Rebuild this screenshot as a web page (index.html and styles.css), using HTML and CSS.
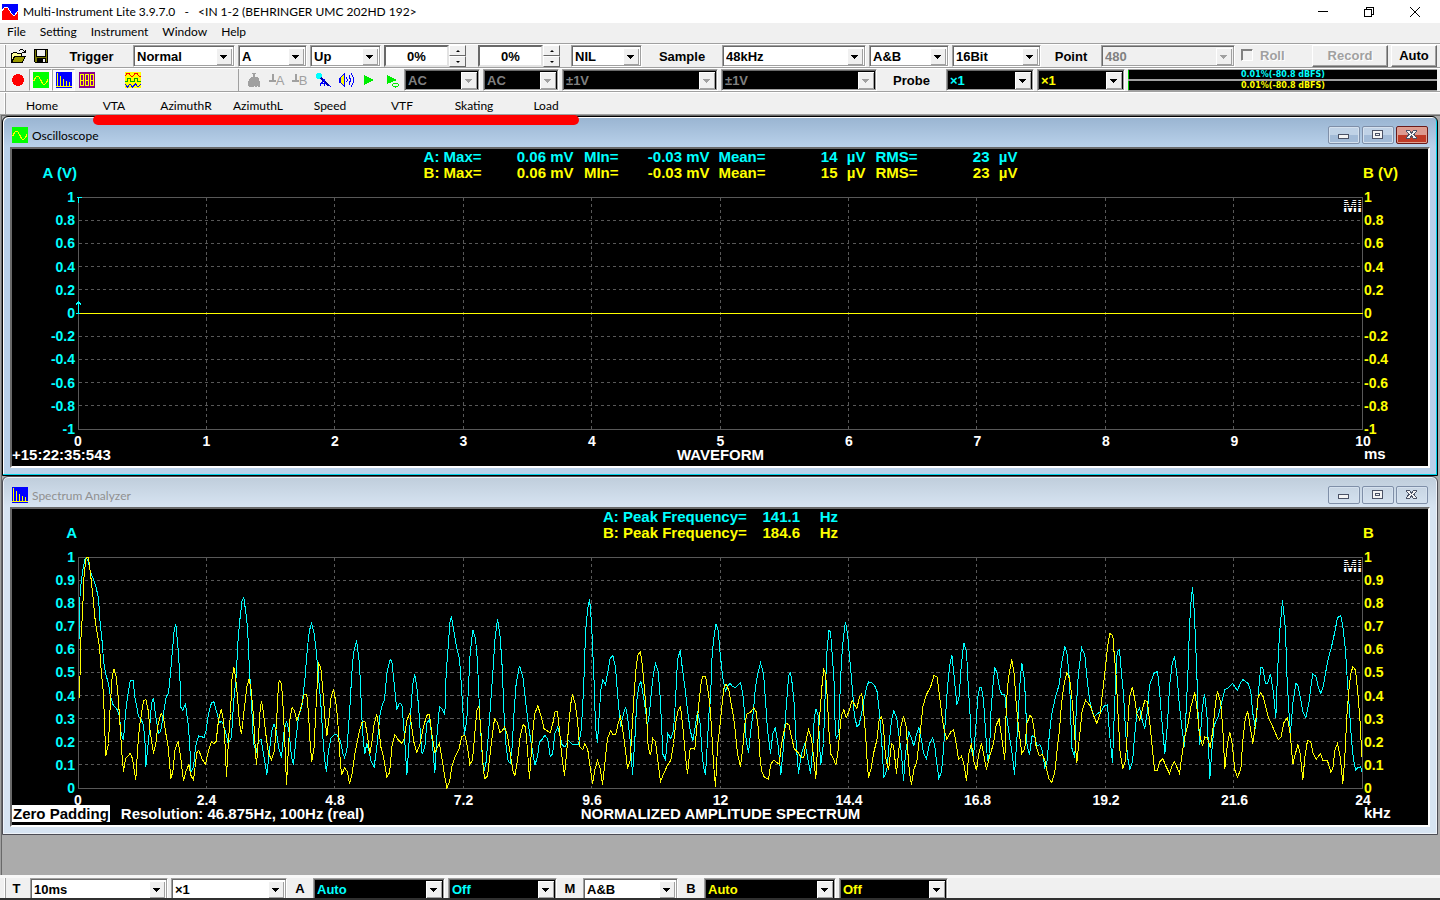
FILE: index.html
```html
<!DOCTYPE html>
<html lang="en">
<head>
<meta charset="utf-8">
<title>Multi-Instrument Lite 3.9.7.0</title>
<link rel="stylesheet" href="styles.css">
</head>
<body>
<svg class="defs" aria-hidden="true">
  <symbol id="i-scope" viewBox="0 0 16 16"><rect width="16" height="16" fill="#0f0"/><path d="M0 8.500h1l1-2 1-1.500 1-1h1l1 1 1 2 1 1.500 1 2 1 1.500h2l1-1 1-1.500 1-2" fill="none" stroke="#ff0"/></symbol>
  <symbol id="i-spec" viewBox="0 0 16 16"><rect width="16" height="16" fill="#00f"/><path d="M1.500 1v13M4.500 4v10M7.500 7v7M10.500 9v5M13.500 10v4M0 14.500h16" fill="none" stroke="#ff0"/></symbol>
</svg>
<header class="titlebar">
  <svg class="ico" viewBox="0 0 16 16"><rect width="16" height="16" fill="#00f"/><path d="M0 7l2-3 2-1 2 1 3 5 2 2 2 0 3-4v9H0z" fill="#f00"/><path d="M0 7l2-3 2-1 2 1 3 5 2 2 2 0 3-4" fill="none" stroke="#fff"/></svg>
  <h1>Multi-Instrument Lite 3.9.7.0 &nbsp; - &nbsp; &lt;IN 1-2 (BEHRINGER UMC 202HD 192&gt;</h1>
  <div class="syscontrols">
    <button aria-label="Minimize"><svg viewBox="0 0 12 12"><path d="M1 5.500h10"/></svg></button>
    <button aria-label="Restore"><svg viewBox="0 0 12 12"><path d="M1.500 3.500h7v7h-7zM3.500 3v-1.500h7v7H9"/></svg></button>
    <button aria-label="Close"><svg viewBox="0 0 12 12"><path class="smooth" d="M1 1l10 10M11 1L1 11"/></svg></button>
  </div>
</header>
<nav class="menubar">
  <button>File</button><button>Setting</button><button>Instrument</button><button>Window</button><button>Help</button>
</nav>
<div class="toolbar">
  <i class="grip"></i>
  <div class="filetools">
    <button aria-label="Open"><svg viewBox="0 0 16 16"><path d="M1.500 14.500v-9h1l1-1h3l1 1h4v3" fill="#ff9" stroke="#000"/><path d="M1.500 14.500l3-6h11l-3.500 6z" fill="#990" stroke="#000"/><path d="M8.500 3.500l1-1 1-1h2l1 1 1 1.500M12 4.500h3v-3" fill="none" stroke="#000"/></svg></button>
    <button aria-label="Save"><svg viewBox="0 0 16 16"><path d="M1.500 1.500h13v13h-12l-1-1z" fill="#770" stroke="#000"/><path d="M4 2h8v6H4z" fill="#f0f0f0"/><path d="M4 10h9v4H4z" fill="#000"/><path d="M10 11h2v3h-2z" fill="#f0f0f0"/><path d="M3.500 2v6.500h9V2" fill="none" stroke="#000"/></svg></button>
  </div>
  <label class="cap w77" for="trg">Trigger</label>
  <span class="combo w102"><select id="trg"><option>Normal</option></select></span>
  <span class="combo w69"><select aria-label="Trigger source"><option>A</option></select></span>
  <span class="combo w71"><select aria-label="Trigger edge"><option>Up</option></select></span>
  <span class="spin"><input aria-label="Trigger level" value="0%"><span><button class="up" aria-label="Raise level"></button><button class="down" aria-label="Lower level"></button></span></span>
  <span class="spin second"><input aria-label="Trigger delay" value="0%"><span><button class="up" aria-label="Raise delay"></button><button class="down" aria-label="Lower delay"></button></span></span>
  <span class="combo w71 after"><select aria-label="Filter"><option>NIL</option></select></span>
  <label class="cap w74" for="smp">Sample</label>
  <span class="combo w144"><select id="smp"><option>48kHz</option></select></span>
  <span class="combo w80"><select aria-label="Channels"><option>A&amp;B</option></select></span>
  <span class="combo w89"><select aria-label="Bit depth"><option>16Bit</option></select></span>
  <label class="cap w54" for="pts">Point</label>
  <span class="combo grow off"><select id="pts" disabled><option>480</option></select></span>
  <label class="roll"><input type="checkbox" disabled>Roll</label>
  <button class="push w76" disabled>Record</button>
  <button class="push w46">Auto</button>
</div>
<div class="toolbar">
  <i class="grip"></i>
  <div class="tools">
    <button aria-label="Run"><svg viewBox="0 0 16 16"><circle cx="8" cy="8" r="6" fill="#f00"/></svg></button>
    <button class="on" aria-label="Oscilloscope"><svg><use href="#i-scope"/></svg></button>
    <button class="on" aria-label="Spectrum analyzer"><svg><use href="#i-spec"/></svg></button>
    <button aria-label="Multimeter"><svg viewBox="0 0 16 16"><rect width="16" height="16" fill="#808"/><path d="M1.500 2.500h3v11h-3zM6.500 2.500h3v11h-3zM11.500 2.500h3v11h-3zM1 8h4M6 8h4M11 8h4" fill="none" stroke="#ff0"/></svg></button>
    <i></i>
    <button aria-label="Signal generator"><svg viewBox="0 0 16 16"><rect width="16" height="16" fill="#ff0"/><path d="M0 4l2-2.500h2L6 4h2l2-2.500h2L14 4h2" fill="none" stroke="#f00"/><path d="M0 9.500h2.500v-3h3v3h4v-3h3v3H16" fill="none" stroke="#0a0"/><path d="M0 12l2.500 3L5 12l2.500 3 3-3 2.500 3 3-3" fill="none" stroke="#00f"/></svg></button>
  </div>
  <div class="tools right">
    <button aria-label="Calibration"><svg viewBox="0 0 16 16"><path d="M6 1h4v1H9v3h2l2 2v2h1v6h-2l-1-2v2H9l-1-1-1 1H3l-1-1V9h1V7l2-2h2V2H6z" fill="#a0a0a0"/></svg></button>
    <button class="gnd" aria-label="Zero A"><svg viewBox="0 0 7 16"><path d="M3.500 2v6M0 8.500h7" stroke="#a0a0a0" stroke-width="2"/></svg>A</button>
    <button class="gnd" aria-label="Zero B"><svg viewBox="0 0 7 16"><path d="M3.500 2v6M0 8.500h7" stroke="#a0a0a0" stroke-width="2"/></svg>B</button>
    <button aria-label="Microphone"><svg viewBox="0 0 16 16"><circle cx="4" cy="4" r="3" fill="#0ff"/><path d="M6 6l8 8" stroke="#00a" stroke-width="2"/><path d="M5 14l4-7 1 7M5 11.500h6M14 13l2 2" fill="none" stroke="#00f"/></svg></button>
    <button aria-label="Speaker"><svg viewBox="0 0 16 16"><path d="M.5 5.500h3v5h-3z" fill="#00f"/><path d="M2.500 5.500l4-4v13l-4-4z" fill="#ff0" stroke="#00f"/><path d="M8.500 5.500l1 2.500-1 2.500M11 3.500l1.500 4.500-1.500 4.500M13 1.500l2.500 4v5l-2.500 4" fill="none" stroke="#00f"/></svg></button>
    <button aria-label="Play"><svg viewBox="0 0 16 16"><path d="M3 3l10 5-10 5z" fill="#0e0"/></svg></button>
    <button aria-label="Play loop"><svg viewBox="0 0 16 16"><path d="M3 3l10 5-10 4z" fill="#0e0"/><ellipse cx="11.500" cy="13" rx="3" ry="2" fill="#f0f0f0" stroke="#0e0"/></svg></button>
  </div>
  <span class="combo black off w76"><select aria-label="Coupling A" disabled><option>AC</option></select></span>
  <span class="combo black off w76"><select aria-label="Coupling B" disabled><option>AC</option></select></span>
  <span class="combo black off w156"><select aria-label="Range A" disabled><option>±1V</option></select></span>
  <span class="combo black off w156"><select aria-label="Range B" disabled><option>±1V</option></select></span>
  <label class="cap w63" for="prb">Probe</label>
  <span class="combo black cy w88"><select id="prb"><option>×1</option></select></span>
  <span class="combo black ye w88"><select aria-label="Probe B"><option>×1</option></select></span>
  <div class="meters"><p class="cy">0.01%(-80.8 dBFS)</p><p class="ye">0.01%(-80.8 dBFS)</p></div>
</div>
<div class="toolbar tabs">
  <i class="grip"></i>
  <button>Home</button><button>VTA</button><button>AzimuthR</button><button>AzimuthL</button><button>Speed</button><button>VTF</button><button>Skating</button><button>Load</button>
</div>
<main class="mdi">
  <div class="marker"></div>
  <section class="win active">
    <header>
      <svg class="ico"><use href="#i-scope"/></svg><h2>Oscilloscope</h2>
      <button aria-label="Minimize"><svg viewBox="0 0 12 10"><rect x=".5" y="4.500" width="10" height="4"/></svg></button>
      <button aria-label="Maximize"><svg viewBox="0 0 12 10"><path d="M.5.5h10v8H.5zM3.500 3.500h4v2h-4z"/></svg></button>
      <button class="close" aria-label="Close"><svg viewBox="0 0 12 10"><path d="M.5.5h3L5.500 3l2-2.500h3v1L8 4.500l2.500 3v1h-3l-2-2.500-2 2.500h-3v-1l2.500-3-2.500-3z"/></svg></button>
    </header>
    <div class="client">
      <div class="head">
        <b class="cy">A (V)</b>
        <div class="stats osc">
          <span class="cy">A: Max=</span><span class="cy">0.06 mV</span><span class="cy">MIn=</span><span class="cy">-0.03 mV</span><span class="cy">Mean=</span><span class="cy">14</span><span class="cy">µV</span><span class="cy">RMS=</span><span class="cy">23</span><span class="cy">µV</span>
          <span class="ye">B: Max=</span><span class="ye">0.06 mV</span><span class="ye">MIn=</span><span class="ye">-0.03 mV</span><span class="ye">Mean=</span><span class="ye">15</span><span class="ye">µV</span><span class="ye">RMS=</span><span class="ye">23</span><span class="ye">µV</span>
        </div>
        <b class="ye">B (V)</b>
      </div>
      <div class="graph">
        <div class="yaxis cy"><span>1</span><span>0.8</span><span>0.6</span><span>0.4</span><span>0.2</span><span>0</span><span>-0.2</span><span>-0.4</span><span>-0.6</span><span>-0.8</span><span>-1</span></div>
        <div class="plot">
          <svg class="tall" viewBox="-1.500 -1.500 3855 699" preserveAspectRatio="none">
            <path class="grid" d="M0 69H3852M0 138H3852M0 207H3852M0 276H3852M0 417H3852M0 486H3852M0 555H3852M0 624H3852"/>
            <path class="grid" d="M384 0V696M768 0V696M1155 0V696M1539 0V696M1926 0V696M2310 0V696M2694 0V696M3081 0V696M3465 0V696"/>
            <path class="frame" d="M0 0H3852V696H0z"/>
            <path class="tb" d="M0 348H3852"/>
            <path class="ta" d="M-6 0H9M0 0V15M-9 348H3M0 348V312M-9 324L0 312L9 324"/>
          </svg>
          <em>MI</em>
        </div>
        <div class="yaxis ye"><span>1</span><span>0.8</span><span>0.6</span><span>0.4</span><span>0.2</span><span>0</span><span>-0.2</span><span>-0.4</span><span>-0.6</span><span>-0.8</span><span>-1</span></div>
      </div>
      <div class="xaxis"><span>0</span><span>1</span><span>2</span><span>3</span><span>4</span><span>5</span><span>6</span><span>7</span><span>8</span><span>9</span><span>10</span></div>
      <div class="foot"><p>+15:22:35:543</p><h3>WAVEFORM</h3><p class="unit">ms</p></div>
    </div>
  </section>
  <section class="win">
    <header>
      <svg class="ico"><use href="#i-spec"/></svg><h2>Spectrum Analyzer</h2>
      <button aria-label="Minimize"><svg viewBox="0 0 12 10"><rect x=".5" y="4.500" width="10" height="4"/></svg></button>
      <button aria-label="Maximize"><svg viewBox="0 0 12 10"><path d="M.5.5h10v8H.5zM3.500 3.500h4v2h-4z"/></svg></button>
      <button class="close" aria-label="Close"><svg viewBox="0 0 12 10"><path d="M.5.5h3L5.500 3l2-2.500h3v1L8 4.500l2.500 3v1h-3l-2-2.500-2 2.500h-3v-1l2.500-3-2.500-3z"/></svg></button>
    </header>
    <div class="client">
      <div class="head">
        <b class="cy">A</b>
        <div class="stats spec">
          <span class="cy">A: Peak Frequency=</span><span class="cy">141.1</span><span class="cy">Hz</span>
          <span class="ye">B: Peak Frequency=</span><span class="ye">184.6</span><span class="ye">Hz</span>
        </div>
        <b class="ye">B</b>
      </div>
      <div class="graph">
        <div class="yaxis cy"><span>1</span><span>0.9</span><span>0.8</span><span>0.7</span><span>0.6</span><span>0.5</span><span>0.4</span><span>0.3</span><span>0.2</span><span>0.1</span><span>0</span></div>
        <div class="plot">
          <svg viewBox="-1.500 -1.500 3855 696" preserveAspectRatio="none">
            <path class="grid" d="M0 69H3852M0 138H3852M0 207H3852M0 276H3852M0 345H3852M0 414H3852M0 483H3852M0 552H3852M0 621H3852"/>
            <path class="grid" d="M384 0V693M768 0V693M1155 0V693M1539 0V693M1926 0V693M2310 0V693M2694 0V693M3081 0V693M3465 0V693"/>
            <path class="frame" d="M0 0H3852V693H0z"/>
            <g transform="translate(-25 -22)">
              <polyline class="ta" points="28,265 28,160 32,105 38,60 44,28 50,24 56,40 60,62 70,88 78,112 85,145 90,220 96,275 100,330 106,370 115,400 120,435 128,462 142,480 148,500 153,550 160,570 166,490 172,440 180,392 189,392 194,440 205,498 214,510 220,525 225,585 227,650 234,580 238,540 244,460 250,443 256,495 265,550 271,545 280,490 288,440 295,428 300,380 306,310 312,240 317,223 321,265 325,310 330,400 331,470 338,480 346,460 350,495 355,530 360,610 362,665 370,650 376,590 385,557 402,562 408,540 415,490 424,458 431,455 438,480 448,518 455,513 465,540 474,580 484,560 490,460 498,380 504,265 510,200 516,150 521,142 526,180 532,230 538,360 545,480 550,580 558,605 565,573 573,568 580,610 590,673 598,600 605,540 612,522 618,540 625,590 634,622 642,540 649,512 656,540 664,620 670,643 678,560 685,500 695,470 704,390 712,290 718,240 724,220 732,250 738,300 745,380 752,460 760,590 765,640 769,664 775,600 782,565 790,555 800,553 810,570 818,610 823,622 830,600 838,490 845,370 850,310 859,271 868,340 875,500 880,580 884,610 890,580 896,600 903,635 912,650 920,590 925,540 930,490 936,465 943,450 950,370 960,327"/>
              <polyline class="tb" points="28,443 32,270 37,190 42,70 48,22 55,22 62,80 68,135 75,210 82,255 88,290 93,360 100,430 103,520 107,616 115,580 120,470 126,380 131,356 138,380 144,440 150,530 156,620 160,664 166,625 180,610 187,625 192,660 197,688 202,600 208,530 214,490 220,452 227,448 234,480 240,545 250,610 257,580 264,520 273,490 280,500 287,550 294,590 302,685 308,665 315,595 324,575 330,610 340,692 347,665 356,643 362,675 370,690 376,640 380,608 386,600 395,625 406,643 414,605 424,575 431,580 438,573 445,510 453,477 460,510 465,590 469,680 475,570 481,490 485,390 491,352 496,380 502,440 508,520 514,552 522,480 530,410 537,386 543,420 550,500 555,590 559,645 565,560 569,490 574,452 580,490 588,560 595,610 604,628 613,600 620,500 624,420 627,391 634,400 640,490 645,600 649,703 655,590 660,500 666,473 673,482 680,510 690,480 702,434 710,434 715,490 720,580 725,634 732,590 736,500 741,410 745,337 752,352 758,420 764,500 770,558 777,500 783,440 790,417 796,450 802,500 808,600 814,675 823,653 832,665 838,700 845,675 855,605 865,555 875,517 884,513 890,545 899,610 906,570 912,520 920,493 926,530 932,590 940,620 950,680 958,668 960,650"/>
            </g>
            <g transform="translate(935 -22)">
              <polyline class="ta" points="0,327 5,335 10,380 16,440 20,478 27,460 35,462 40,520 45,590 50,675 56,590 62,480 68,400 74,373 80,410 86,480 92,570 96,612 104,590 110,520 118,507 124,550 130,620 134,669 140,560 148,470 155,475 164,493 168,370 174,290 180,210 184,202 190,235 200,295 208,325 214,410 218,480 223,553 230,510 235,410 240,310 248,239 256,265 262,335 268,480 275,600 281,664 288,635 295,550 302,450 308,370 314,270 322,206 330,260 336,350 342,500 348,590 354,634 360,638 366,590 372,480 378,400 388,347 398,380 406,450 414,520 424,585 434,645 442,620 448,575 458,565 464,555 473,568 480,618 487,612 494,550 503,530 510,560 516,585 524,590 535,571 547,583 565,583 572,550 577,480 582,370 586,250 592,180 598,146 602,190 606,260 612,400 616,530 622,577 628,480 632,420 638,388 646,405 652,370 660,325 668,317 676,350 682,430 691,530 698,500 706,470 712,500 720,570 727,673 734,570 740,450 746,410 752,393 760,440 766,480 772,525 778,490 784,420 790,370 796,341 804,365 810,440 815,540 818,612 826,628 833,550 842,566 850,540 856,450 862,330 870,300 876,350 884,410 892,480 900,540 908,572 915,530 922,484 930,520 935,600 940,650 946,673 952,570 957,480 961,452"/>
              <polyline class="tb" points="0,650 5,590 14,553 25,570 35,580 42,565 50,510 59,490 66,540 72,580 80,607 90,580 100,530 110,495 118,493 125,550 134,605 148,580 156,630 164,680 170,713 178,695 185,650 195,620 206,598 215,560 224,555 232,590 239,643 247,630 254,550 260,480 266,468 272,540 278,640 283,686 292,678 300,610 306,560 313,506 322,517 329,547 336,542 343,530 352,555 360,610 368,660 374,677 382,630 390,560 399,523 406,530 412,600 418,685 424,600 430,520 434,490 443,467 452,495 462,537 480,547 488,520 495,484 502,485 508,540 514,610 523,677 530,600 536,520 542,460 547,433 555,460 562,510 568,590 578,598 584,580 593,600 600,650 607,700 615,655 622,632 630,655 637,703 644,640 652,565 661,542 668,553 677,552 684,520 691,500 698,540 706,600 712,655 720,630 726,530 732,430 738,350 743,315 751,305 757,350 764,430 769,490 774,590 781,615 788,565 796,575 804,640 811,694 820,672 832,645 842,630 850,580 858,510 864,480 871,470 878,530 886,620 892,670 900,595 914,597 920,530 926,460 934,390 939,378 946,378 955,430 960,475"/>
            </g>
            <g transform="translate(1895 -22)">
              <polyline class="ta" points="1,452 5,330 10,270 17,221 24,240 30,310 38,385 46,423 52,408 60,400 68,410 77,412 84,403 91,397 98,430 104,500 108,570 115,607 122,540 130,480 136,410 144,365 151,338 160,370 166,450 172,540 181,610 188,550 195,533 202,570 208,630 212,673 220,590 226,500 232,420 236,375 241,368 246,400 252,460 258,580 265,670 274,610 284,580 292,620 301,670 308,590 312,510 317,476 325,500 328,580 332,643 340,580 344,460 350,310 356,241 361,245 366,310 372,400 374,500 378,566 385,550 390,420 394,330 400,260 406,215 412,250 420,340 427,420 432,490 440,529 447,523 454,490 462,445 470,408 476,395 485,398 494,408 501,425 508,490 515,580 521,683 530,660 537,580 544,510 551,481 560,505 567,560 574,610 580,693 586,610 596,545 604,565 611,588 618,555 626,532 634,570 640,608 649,625 658,580 668,563 674,590 680,640 686,685 694,665 700,600 706,500 712,410 718,350 725,314 731,370 740,463 747,440 753,350 761,278 769,305 774,400 780,500 784,600 790,618 797,530 803,440 809,412 814,413 820,450 826,540 832,632 838,610 842,490 848,410 854,352 861,370 868,415 875,433 884,434 890,500 898,560 906,610 913,673 920,570 926,460 930,390 935,338 943,390 948,500 950,580 958,615 960,598"/>
              <polyline class="tb" points="0,475 5,550 10,640 16,710 22,590 30,520 36,460 42,410 48,403 56,420 62,455 70,500 76,550 82,610 91,650 98,590 104,520 110,492 120,487 131,473 138,485 145,540 150,630 155,665 162,680 175,688 181,645 190,630 207,642 213,590 220,550 228,520 236,523 244,560 252,595 262,605 274,623 281,622 288,570 295,538 304,565 310,620 317,685 324,560 330,480 336,400 341,358 346,370 352,450 356,540 362,612 370,625 377,645 384,600 390,530 394,495 401,479 408,502 416,485 426,450 440,476 448,440 455,431 460,480 466,550 470,620 475,683 484,650 490,610 500,570 507,510 514,500 520,530 526,620 535,660 544,581 550,585 559,670 566,600 572,530 580,497 588,530 594,620 598,670 604,703 611,658 620,635 626,580 632,530 638,470 648,435 662,408 671,377 680,378 686,420 692,470 700,530 710,568 722,545 730,538 738,580 745,628 754,618 762,645 769,693 776,610 784,580 790,630 799,660 806,610 814,580 820,610 829,658 838,620 850,580 858,525 867,507 874,560 884,630 888,480 892,410 898,365 905,328 912,370 918,460 926,540 935,610 944,595 950,520 960,495"/>
            </g>
            <g transform="translate(2855 -22)">
              <polyline class="ta" points="0,598 6,556 14,562 21,587 29,583 36,600 44,652 50,640 56,570 64,495 76,440 88,400 94,340 104,290 110,305 118,390 122,500 124,590 134,622 138,480 144,380 154,292 164,315 172,400 180,460 192,500 202,490 213,485 222,468 232,464 238,550 247,638 252,500 256,400 261,305 268,298 274,370 280,430 286,540 292,620 299,657 307,635 314,550 320,490 328,473 336,510 344,535 352,480 358,405 372,369 382,364 388,420 394,500 404,610 412,520 418,410 426,340 433,319 440,370 448,470 456,540 463,590 468,480 474,350 478,230 482,160 487,112 492,180 496,270 500,370 504,500 509,583 516,480 523,431 530,490 535,590 539,685 546,590 552,525 564,500 572,465 584,418 595,413 607,400 622,421 630,400 638,388 654,400 662,425 668,490 676,535 683,450 688,390 692,352 698,353 706,401 713,398 721,371 730,430 737,502 742,370 748,250 757,151 766,240 770,370 776,480 781,547 788,460 797,400 803,405 812,450 818,485 827,502 836,460 842,410 848,372 857,377 864,410 872,430 880,405 892,335 904,290 914,245 922,202 932,197 938,230 946,300 952,400 958,480 964,570 970,630 977,660 983,652 992,650 995,665"/>
              <polyline class="tb" points="0,495 6,505 12,540 18,590 27,617 36,613 44,630 50,660 56,685 65,697 74,665 82,590 88,540 94,460 102,400 110,368 118,385 124,430 130,500 136,590 140,637 148,560 156,480 166,450 180,467 188,490 200,520 210,490 218,420 226,350 232,290 239,250 248,256 252,310 258,380 264,500 270,610 278,655 286,630 292,540 298,440 307,410 314,450 320,490 329,510 336,480 344,451 352,455 360,530 367,600 373,660 382,661 388,635 398,625 408,650 418,670 426,645 433,634 448,670 456,610 464,560 474,520 482,470 494,427 500,470 508,550 517,587 524,560 532,563 540,592 548,540 556,460 562,422 572,460 578,540 584,655 592,580 599,545 606,580 614,660 622,680 632,658 638,570 646,500 653,485 660,530 668,580 676,520 684,440 692,427 700,442 714,500 730,535 744,568 752,562 762,515 772,502 780,550 788,642 796,610 803,584 810,610 818,690 824,620 832,571 842,575 848,608 858,627 871,610 878,632 892,632 902,665 908,655 914,600 922,580 930,620 938,700 944,620 950,500 956,420 962,370 968,350 976,360 984,440 990,520 995,620"/>
            </g>
          </svg>
          <em>MI</em>
        </div>
        <div class="yaxis ye"><span>1</span><span>0.9</span><span>0.8</span><span>0.7</span><span>0.6</span><span>0.5</span><span>0.4</span><span>0.3</span><span>0.2</span><span>0.1</span><span>0</span></div>
      </div>
      <div class="xaxis"><span>0</span><span>2.4</span><span>4.8</span><span>7.2</span><span>9.6</span><span>12</span><span>14.4</span><span>16.8</span><span>19.2</span><span>21.6</span><span>24</span></div>
      <div class="foot"><p><mark>Zero Padding</mark>Resolution: 46.875Hz, 100Hz (real)</p><h3>NORMALIZED AMPLITUDE SPECTRUM</h3><p class="unit">kHz</p></div>
    </div>
  </section>
</main>
<footer class="toolbar bottom">
  <i class="grip"></i>
  <label class="cap w21" for="tt">T</label>
  <span class="combo w138"><select id="tt"><option>10ms</option></select></span>
  <span class="combo w116"><select aria-label="Time zoom"><option>×1</option></select></span>
  <label class="cap w20" for="ta">A</label>
  <span class="combo black cy w132"><select id="ta"><option>Auto</option></select></span>
  <span class="combo black cy w109"><select aria-label="A offset"><option>Off</option></select></span>
  <label class="cap w20" for="tm">M</label>
  <span class="combo w95"><select id="tm"><option>A&amp;B</option></select></span>
  <label class="cap w20" for="tb">B</label>
  <span class="combo black ye w132"><select id="tb"><option>Auto</option></select></span>
  <span class="combo black ye w109"><select aria-label="B offset"><option>Off</option></select></span>
</footer>
</body>
</html>
```
FILE: styles.css
```css
* { box-sizing: border-box; margin: 0; padding: 0; }
html, body { height: 100%; }
body {
  display: flex; flex-direction: column; overflow: hidden;
  background: #f0f0f0; color: #000;
  font: 12px Lato, "Open Sans", sans-serif;
  border-bottom: 2px solid #303030;
}
button { border: 0; background: none; font: inherit; color: inherit; }
svg { display: block; fill: none; shape-rendering: crispEdges; }
.defs { position: absolute; width: 0; height: 0; }
.ico { width: 16px; height: 16px; flex: none; }
.cy { color: #0ff; }
.ye { color: #ff0; }

.titlebar { display: flex; align-items: center; height: 23px; flex: none; background: #fff; padding: 0 3px 0 2px; gap: 5px; }
.titlebar h1 { flex: 1; font-size: 12px; font-weight: 400; white-space: pre; }
.syscontrols { display: flex; height: 20px; }
.syscontrols button { width: 46px; display: grid; place-items: center; }
.syscontrols button:last-child { width: 45px; }
.syscontrols svg { width: 12px; height: 12px; stroke: #000; }
.smooth { shape-rendering: auto; }

.menubar { display: flex; height: 21px; flex: none; gap: 14px; padding: 0 7px 3px; border-bottom: 1px solid #a0a0a0; }

.toolbar {
  display: flex; gap: 3px; height: 24px; flex: none; padding: 0 3px 0 4px;
  border-top: 1px solid #fff; border-bottom: 1px solid #a0a0a0;
  font: bold 13px "Liberation Sans", Arial, sans-serif; overflow: hidden;
}
.toolbar > * { flex: none; }
.toolbar > .grip { width: 2px; margin-right: -3px; background: #fff; border-right: 1px solid #a0a0a0; }
.cap { display: flex; align-items: center; justify-content: center; }
.combo {
  display: grid; grid-template-columns: 1fr 16px; height: 22px; background: #fff;
  border: 1px solid; border-color: #a0a0a0 #fff #fff #a0a0a0;
  box-shadow: inset 1px 1px #696969, inset -1px -1px #a0a0a0;
  padding: 2px 2px 1px;
}
.combo select {
  grid-area: 1 / 1 / 2 / 3; appearance: none; border: 0; background: none;
  font: inherit; color: inherit; padding-left: 1px; min-width: 0; outline: 0; opacity: 1;
}
.combo::after {
  content: ""; grid-area: 1 / 2; pointer-events: none;
  background: linear-gradient(#000, #000) 4px 7px / 7px 1px no-repeat,
    linear-gradient(#000, #000) 5px 8px / 5px 1px no-repeat,
    linear-gradient(#000, #000) 6px 9px / 3px 1px no-repeat,
    linear-gradient(#000, #000) 7px 10px / 1px 1px no-repeat, #f0f0f0;
  box-shadow: inset 1px 1px #fff, inset -1px -1px #a0a0a0;
}
.combo.black { background: #000; }
.combo.off { color: #808080; }
.combo.off:not(.black) { background: #f0f0f0; }
.combo.off::after {
  background: linear-gradient(#a0a0a0, #a0a0a0) 4px 7px / 7px 1px no-repeat,
    linear-gradient(#a0a0a0, #a0a0a0) 5px 8px / 5px 1px no-repeat,
    linear-gradient(#a0a0a0, #a0a0a0) 6px 9px / 3px 1px no-repeat,
    linear-gradient(#a0a0a0, #a0a0a0) 7px 10px / 1px 1px no-repeat, #f0f0f0;
}
.toolbar > .grow { flex: 1; }
.after { margin-left: 8px; }
.w20 { width: 20px; } .w21 { width: 21px; } .w46 { width: 46px; } .w54 { width: 54px; }
.w63 { width: 63px; } .w69 { width: 69px; } .w71 { width: 71px; } .w74 { width: 74px; }
.w76 { width: 76px; } .w77 { width: 77px; } .w80 { width: 80px; } .w88 { width: 88px; } .w89 { width: 89px; }
.w95 { width: 95px; } .w102 { width: 102px; } .w109 { width: 109px; } .w116 { width: 116px; }
.w132 { width: 132px; } .w138 { width: 138px; } .w144 { width: 144px; } .w156 { width: 156px; }

.filetools { display: flex; align-items: center; gap: 7px; width: 44px; padding-left: 4px; }
.filetools svg { width: 16px; height: 16px; }
.spin { display: flex; width: 82px; }
.spin.second { margin-left: 9px; }
.spin input {
  width: 65px; text-align: center; font: inherit; background: #fff; outline: 0;
  border: 2px solid; border-color: #696969 #e3e3e3 #e3e3e3 #696969;
}
.spin span { display: grid; width: 17px; grid-template-rows: 1fr 1fr; }
.spin button { border: 1px solid; border-color: #fff #696969 #696969 #fff; display: grid; place-items: center; }
.spin button::before { content: ""; border: 2px solid transparent; }
.spin .up::before { border-top: 0; border-bottom-color: #000; }
.spin .down::before { border-bottom: 0; border-top-color: #000; }
.roll { display: flex; align-items: center; gap: 7px; width: 71px; padding: 0 0 2px 3px; color: #a0a0a0; text-shadow: 1px 1px #fff; }
.roll input { appearance: none; width: 12px; height: 12px; border: 1px solid; border-color: #808080 #fff #fff #808080; box-shadow: inset 1px 1px #808080; }
.push { border: 1px solid; border-color: #fff #696969 #696969 #fff; box-shadow: inset -1px -1px #a0a0a0; padding-bottom: 2px; }
.push:disabled { color: #a0a0a0; text-shadow: 1px 1px #fff; }

.tools { display: flex; width: 138px; }
.tools > * { width: 23px; display: flex; align-items: center; justify-content: center; }
.tools svg { width: 16px; height: 16px; }
.tools .on { background: #f8f8f8; border: 1px solid; border-color: #a0a0a0 #fff #fff #a0a0a0; }
.tools.right { flex: 1 0 165px; max-width: 166px; margin-left: auto; border-left: 1px solid #a0a0a0; padding-left: 3px; margin-right: -3px; }
.tools .gnd { color: #a0a0a0; font-weight: 400; font-size: 13px; }
.tools .gnd svg { width: 7px; }
.meters { display: grid; gap: 2px; padding: 1px 0; background: #a0a0a0; flex: 0 0 309px; }
.meters p { background: #000; border-left: 1px solid #0c0; text-align: center; font: bold 8px/9px "DejaVu Sans", sans-serif; }

.tabs { font: 12px Lato, "Open Sans", sans-serif; gap: 0; height: 23px; }
.tabs > .grip { margin-right: 0; }
.tabs button { width: 72px; padding-top: 3px; }

.mdi { position: relative; flex: 1; min-height: 0; background: #ababab; border-left: 1px solid #a0a0a0; padding: 1px 2px 0 1px; box-shadow: inset 1px 1px #696969; }
.marker { position: absolute; left: 92px; top: 0; width: 486px; height: 10px; border-radius: 5px; background: #f00; z-index: 1; }
.win {
  border: 1px solid #4c4c54; border-radius: 6px 6px 0 0; padding: 1px 7px 7px;
  background: linear-gradient(#bfcddb, #d7e4f2 30px); box-shadow: inset 0 0 0 1px #eef3f9;
}
.win.active { background: linear-gradient(#99b4d1, #b9d1ea 30px); border-color: #000; box-shadow: inset -1px -1px #00d2e8, inset 1px 1px #fff; }
.win header { display: flex; align-items: center; gap: 2px; height: 29px; padding: 5px 2px 0; }
.win h2 { flex: 1; font-size: 12px; font-weight: 400; color: #000; padding-left: 2px; }
.win:not(.active) h2 { color: #909090; }
.win header button { width: 32px; height: 18px; display: grid; place-items: center; border: 1px solid #7f8fa8; border-radius: 2px; box-shadow: inset 0 0 0 1px #d5e1ee; }
.win header button svg { width: 12px; height: 10px; fill: #f4f4f4; stroke: #4b5266; }
.win.active header button { background: linear-gradient(#c0d2e6 50%, #a3bbd7 50%); }
.win.active header .close { background: linear-gradient(#dd9a90 50%, #bf3a26 50%); border-color: #6b1a1a; box-shadow: inset 0 0 0 1px #e0a090; }
.client {
  background: #000; color: #fff; border: 2px solid; border-color: #696969 #fff #fff #696969;
  font: bold 15px/14px "Liberation Sans", Arial, sans-serif;
}
.head { display: grid; grid-template-columns: 66px 1fr 65px; height: 48px; }
.head b { line-height: 16px; padding-top: 16px; }
.head > b:first-child { text-align: right; padding-right: 1px; }
.stats { display: grid; justify-content: center; align-content: start; line-height: 16px; white-space: nowrap; text-align: right; }
.stats.osc { grid-template-columns: 58px 92px 45px 91px 56px 72px 28px 52px 72px 28px; }
.stats.spec { grid-template-columns: 141px 56px 38px; }
.graph, .foot { display: grid; grid-template-columns: 66px 1fr 65px; }
.yaxis { display: flex; flex-direction: column; justify-content: space-between; margin: -7px 0 -6px; padding: 0 1px; font-size: 14px; }
.yaxis:first-child { text-align: right; padding-right: 3px; }
.plot { position: relative; }
.plot svg { width: 100%; height: 232px; overflow: visible; }
.plot .tall { height: 233px; }
.plot path, .plot polyline { stroke-width: 1px; vector-effect: non-scaling-stroke; }
.grid { stroke: #585858; stroke-dasharray: 3 3; }
.frame { stroke: #585858; }
.ta { stroke: #0ff; }
.tb { stroke: #ff0; }
.plot em { position: absolute; right: 1px; top: 3px; font-style: normal; font-size: 17px; line-height: 14px; }
.plot em::after { content: ""; position: absolute; inset: 0 0 5px; background: repeating-linear-gradient(transparent 0 1px, #000 1px 2px); }
.xaxis { display: flex; justify-content: space-between; margin: 4px 45px 0 46px; font-size: 14px; }
.xaxis span { width: 40px; text-align: center; }
.foot { height: 18px; }
.foot p { white-space: nowrap; width: 0; }
.foot h3 { font-size: 15px; text-align: center; }
.foot .unit { padding-left: 1px; margin-top: -1px; }
.foot mark { background: #fff; color: #000; margin-right: 11px; padding: 0 1px; }

.bottom { height: 23px; border-bottom: 0; border-top: 3px solid #f8f8f8; }
```
